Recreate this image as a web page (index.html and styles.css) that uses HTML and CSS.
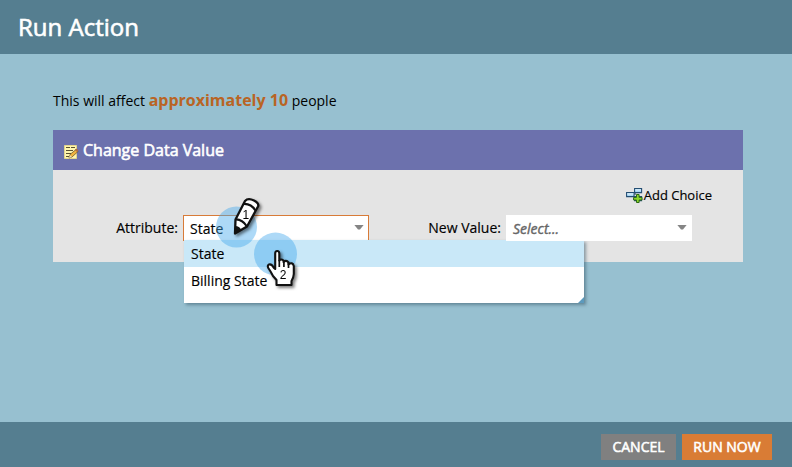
FILE: index.html
```
<!DOCTYPE html>
<html lang="en">
<head>
<meta charset="utf-8">
<title>Run Action</title>
<link rel="stylesheet" href="styles.css">
</head>
<body>
<div class="dialog">
  <header class="titlebar"><h1>Run Action</h1></header>
  <main class="content">
    <p class="summary">This will affect <strong>approximately 10</strong> people</p>
    <section class="panel">
      <h2 class="panel-head">
        <svg class="note-icon" viewBox="0 0 15 16">
          <path d="M.5 1.5h12v13H.5z" fill="#fff5ae" stroke="#e3d48c"/>
          <path d="M2 3.500h4M7 3.500h4M2 6.500h7M2 9.500h5M2 12.500h3" stroke="#5b5130"/>
          <path d="M5 14l1-3.500 6-5 2 2-6 5.500z" fill="#f2b23d" stroke="#594727" stroke-width=".7"/>
          <path d="M11 6l1.500-1.500L14.500 6.500 13 8z" fill="#ad6b45"/>
          <path d="M5 14l1-3 2 2z" fill="#eee0b6"/>
        </svg>
        <span>Change Data Value</span>
      </h2>
      <div class="panel-body">
        <div class="add-choice">
          <svg class="add-icon" viewBox="0 0 17 16">
            <path d="M8 7h2" stroke="#173a57"/>
            <path d="M.6 5.600h7.400v4H.6zM8.600 1.600h7v4h-7zM8.600 9.600h7v4h-7z" fill="#a9d7f5" stroke="#234d72" stroke-width="1.1"/>
            <path d="M1.200 6.200h6.200v1.300H1.200zM9.200 2.200H15v1.300H9.200z" fill="#e0f4ff"/>
            <path d="M10.500 7.500h2.600v2.900H16V13h-2.900v2.500h-2.600V13H7.600v-2.600h2.900z" fill="#8bd52b" stroke="#2c6b13"/>
          </svg>
          <span>Add Choice</span>
        </div>
        <div class="fields">
          <label class="label attribute">Attribute:</label>
          <div class="select active"><span>State</span><i class="arrow"></i>
            <div class="menu">
              <div class="option selected">State</div>
              <div class="option">Billing State</div>
              <i class="resize"></i>
            </div>
          </div>
          <label class="label new-value">New Value:</label>
          <div class="select empty"><span>Select...</span><i class="arrow"></i></div>
        </div>
      </div>
    </section>
  </main>
  <footer class="footer">
    <button class="button cancel">CANCEL</button>
    <button class="button run">RUN NOW</button>
  </footer>
  <svg class="callouts" viewBox="210 190 100 105">
    <circle cx="236.5" cy="227" r="20.5" fill="#42a8ec" fill-opacity=".43"/>
    <circle cx="275.5" cy="254" r="21.5" fill="#42a8ec" fill-opacity=".43"/>
    <g class="pointer">
      <path d="M235 233.500L235.500 219.500L245 201Q248 197.500 254 200.500Q259.500 203.500 258 206.500L247 226.500Z" fill="#fff" stroke="#111" stroke-width="2.3" stroke-linejoin="round"/>
      <path d="M243.600 204Q251 203.500 255.500 210.500M235.500 219.500Q242 219 247 226.500" fill="none" stroke="#111" stroke-width="2.2"/>
      <path d="M235 233.500L235.200 226Q239.500 226 241 229.500Z" fill="#111"/>
      <text x="242.500" y="218.500">1</text>
    </g>
    <g class="pointer">
      <path d="M276.500 285V280L273 276Q270.500 271 268.300 268Q267 265.500 269 264.500Q271.500 263.500 274 268L275.200 269V253.500Q275.200 251 277.200 251Q279.300 251 279.300 253.500V260.500Q281 258.500 283.500 260.500V262Q286 259.500 288.500 262.500V264.500Q292.500 261.500 293.800 266V274Q293.500 278 291.500 281V285Z" fill="#fff" stroke="#111" stroke-width="2.1" stroke-linejoin="round"/>
      <path d="M279.300 260V267M283.900 261V267M288.500 262.500V268" fill="none" stroke="#111" stroke-width="1.7"/>
      <text x="279.700" y="279.300">2</text>
    </g>
  </svg>
</div>
</body>
</html>
```
FILE: styles.css
```
* { box-sizing: border-box; }
body { margin: 0; font-family: "Open Sans", sans-serif; color: #000; }
.dialog { position: relative; display: flex; flex-direction: column; width: 792px; height: 467px; background: #97c0d0; overflow: hidden; }
.titlebar { height: 54px; padding-left: 18px; background: #557e90; }
h1 { margin: 0; color: #fff; font-size: 24px; line-height: 54px; font-weight: 400; -webkit-text-stroke: .6px #fff; }
.content { flex: 1; padding: 34px 49px 0 53px; }
.summary { margin: 0; height: 42px; line-height: 25px; font-size: 14px; white-space: nowrap; }
.summary strong { font-size: 16px; color: #b96424; }
.panel { height: 132px; background: #e4e4e4; }
.panel-head { display: flex; align-items: center; gap: 4px; height: 40px; margin: 0; padding-left: 11px; background: #6c71ad; color: #fff; font-size: 16px; font-weight: 400; -webkit-text-stroke: .6px #fff; }
.note-icon { width: 15px; height: 16px; margin-top: 4px; }
.panel-body { padding-top: 15px; }
.add-choice { display: flex; align-items: center; justify-content: flex-end; height: 20px; padding-right: 31px; gap: 1px; font-size: 13px; -webkit-text-stroke: .15px #000; }
.add-icon { width: 17px; height: 16px; }
.fields { display: flex; height: 26px; margin-top: 10px; -webkit-text-stroke: .15px; }
.label { font-size: 14px; line-height: 26px; text-align: right; padding-right: 5px; white-space: nowrap; }
.attribute { width: 130px; }
.new-value { width: 137px; }
.select { position: relative; display: flex; align-items: center; justify-content: space-between; width: 186px; height: 26px; padding: 0 5px 0 7px; background: #fff; font-size: 14px; }
.active { border: 1px solid #d87b38; padding: 0 4px 0 6px; }
.empty { color: #666; font-style: italic; padding-top: 1px; -webkit-text-stroke: .4px #666; }
.arrow { width: 10px; height: 5px; margin-top: -3px; background: #858585; clip-path: polygon(0 0, 100% 0, 60% 100%, 40% 100%); }
.active .arrow { margin-top: -2px; }
.menu { position: absolute; left: 0; top: 24px; width: 400px; height: 63px; background: #fff; box-shadow: 2px 2px 3px rgba(50, 80, 95, .5); }
.option { height: 27px; padding-left: 7px; line-height: 27px; }
.selected { background: #c9e8f8; }
.resize { position: absolute; right: 0; bottom: 0; width: 6px; height: 6px; background: #5c9abd; clip-path: polygon(100% 0, 100% 100%, 0 100%); }
.footer { display: flex; align-items: flex-start; justify-content: flex-end; gap: 6px; height: 45px; padding: 12px 20px 0 0; background: #557e90; }
.button { height: 26px; border: 0; padding: 0 0 2px; font: 14px "Open Sans", sans-serif; color: #fff; -webkit-text-stroke: .55px #fff; }
.cancel { width: 75px; background: #808080; }
.run { width: 90px; background: #d97c35; }
.callouts { position: absolute; left: 210px; top: 190px; width: 100px; height: 105px; }
.callouts text { font: 12px "Liberation Sans", sans-serif; fill: #000; }
.pointer { filter: drop-shadow(2px 2px 1.5px rgba(0, 0, 0, .5)); }
```
